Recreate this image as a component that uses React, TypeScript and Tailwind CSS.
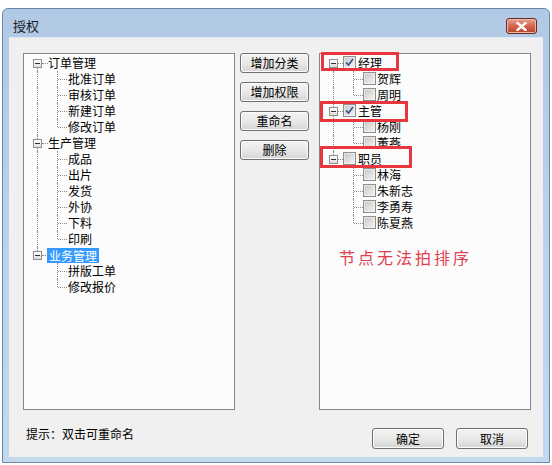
import React from 'react';

type TreeNode = {
  label: string;
  checked?: boolean;
  selected?: boolean;
  children?: string[];
};

const LEFT_TREE: TreeNode[] = [
  { label: '订单管理', children: ['批准订单', '审核订单', '新建订单', '修改订单'] },
  { label: '生产管理', children: ['成品', '出片', '发货', '外协', '下料', '印刷'] },
  { label: '业务管理', selected: true, children: ['拼版工单', '修改报价'] },
];

const RIGHT_TREE: TreeNode[] = [
  { label: '经理', checked: true, children: ['贺辉', '周明'] },
  { label: '主管', checked: true, children: ['杨刚', '董燕'] },
  { label: '职员', checked: false, children: ['林海', '朱新志', '李勇寿', '陈夏燕'] },
];

const FONT = "font-['Noto_Sans_CJK_SC','Noto_Sans',sans-serif]";

const Expander: React.FC = () => (
  <span className="absolute left-[9px] top-[4px] w-[9px] h-[9px] border border-[#919191] bg-gradient-to-b from-white to-[#dcdcdc] flex items-center justify-center">
    <span className="w-[5px] h-px bg-[#333]" />
  </span>
);

const CheckBox: React.FC<{ checked?: boolean; left: string }> = ({ checked, left }) => (
  <span
    className={`absolute ${left} top-[1px] w-[13px] h-[13px] border border-[#8f8f8f] bg-gradient-to-br from-[#e2e2e2] to-[#f6f6f6] flex items-center justify-center`}
  >
    <span className="w-[9px] h-[9px] bg-gradient-to-br from-[#cbcbcb] to-[#f1f1f1] flex items-center justify-center">
      {checked && (
        <svg width="9" height="9" viewBox="0 0 9 9">
          <path d="M1 4.5 L3.5 7 L8 1" fill="none" stroke="#3b4d91" strokeWidth="1.6" />
        </svg>
      )}
    </span>
  </span>
);

const DotV: React.FC<{ left: string; half?: 'top' | 'bottom' }> = ({ left, half }) => (
  <span
    className={`absolute ${left} w-0 border-l border-dotted border-[#8a8a8a] ${
      half === 'top' ? 'top-0 h-[8px]' : half === 'bottom' ? 'top-[8px] bottom-0' : 'top-0 bottom-0'
    }`}
  />
);

const DotH: React.FC<{ left: string; width: string }> = ({ left, width }) => (
  <span className={`absolute ${left} ${width} top-[8px] h-0 border-t border-dotted border-[#8a8a8a]`} />
);

const Tree: React.FC<{ nodes: TreeNode[]; checks?: boolean }> = ({ nodes, checks }) => {
  const rows: React.ReactNode[] = [];
  nodes.forEach((n, i) => {
    const first = i === 0;
    const last = i === nodes.length - 1;
    rows.push(
      <div key={n.label} className="relative h-[16px] flex items-center">
        <DotV left="left-[13px]" half={first ? 'bottom' : last ? 'top' : undefined} />
        <DotH left="left-[18px]" width={checks ? 'w-[5px]' : 'w-[6px]'} />
        <Expander />
        {checks ? (
          <>
            <CheckBox checked={n.checked} left="left-[23px]" />
            <span className="ml-[38px]">{n.label}</span>
          </>
        ) : n.selected ? (
          <span className="ml-[23px] px-[2px] leading-[15px] bg-[#3399ff] text-white">{n.label}</span>
        ) : (
          <span className="ml-[24px]">{n.label}</span>
        )}
      </div>
    );
    (n.children ?? []).forEach((c, j) => {
      const lastChild = j === (n.children ?? []).length - 1;
      rows.push(
        <div key={n.label + c} className="relative h-[16px] flex items-center">
          {!last && <DotV left="left-[13px]" />}
          <DotV left="left-[33px]" half={lastChild ? 'top' : undefined} />
          <DotH left="left-[34px]" width="w-[9px]" />
          {checks ? (
            <>
              <CheckBox left="left-[43px]" />
              <span className="ml-[57px]">{c}</span>
            </>
          ) : (
            <span className="ml-[44px]">{c}</span>
          )}
        </div>
      );
    });
  });
  return <div className="pt-[1px] text-[12px] leading-[16px] text-black">{rows}</div>;
};

const Btn: React.FC<{ label: string; w: string; h: string }> = ({ label, w, h }) => (
  <button
    className={`${w} ${h} border border-[#707070] rounded-[3px] bg-gradient-to-b from-[#f3f3f3] via-[#e9e9e9] to-[#d4d4d4] text-[12px] text-black flex items-center justify-center shadow-[inset_0_0_0_1px_#fbfbfb]`}
  >
    {label}
  </button>
);

export default function App() {
  return (
    <div className={`w-[552px] h-[465px] bg-white pt-[8px] pl-[2px] ${FONT}`}>
      <div className="w-[548px] h-[455px] flex flex-col border border-[#6a87ab] rounded-t-[6px] bg-gradient-to-b from-[#b1c9e5] via-[#bcd2eb] to-[#c4d8ee]">
        {/* title bar */}
        <div className="h-[28px] flex items-start justify-between pl-[10px] pr-[12px]">
          <span className="mt-[10px] text-[13px] leading-[14px] text-[#1b1b1b]">授权</span>
          <div className="mt-[9px] w-[31px] h-[16px] rounded-[3px] border border-[#6e2a1f] bg-gradient-to-b from-[#e7a493] via-[#d0654c] to-[#b8432c] flex items-center justify-center shadow-[inset_0_0_0_1px_#eeb7a8]">
            <svg width="11" height="9" viewBox="0 0 11 9">
              <path d="M1.5 1 L9.5 8 M9.5 1 L1.5 8" stroke="#ffffff" strokeWidth="2.4" strokeLinecap="square" />
            </svg>
          </div>
        </div>

        {/* client area */}
        <div className="mx-[6px] h-[420px] bg-[#f0f0f0] border-t border-[#dfe8f3] flex flex-col">
          <div className="flex pt-[15px] pl-[14px]">
            <div className="w-[212px] h-[357px] border border-[#828790] bg-[#fcfcfc]">
              <Tree nodes={LEFT_TREE} />
            </div>

            <div className="ml-[5px] w-[69px] flex flex-col gap-[9px]">
              <Btn label="增加分类" w="w-[69px]" h="h-[20px]" />
              <Btn label="增加权限" w="w-[69px]" h="h-[20px]" />
              <Btn label="重命名" w="w-[69px]" h="h-[20px]" />
              <Btn label="删除" w="w-[69px]" h="h-[20px]" />
            </div>

            <div className="relative ml-[10px] w-[212px] h-[357px] border border-[#828790] bg-[#fcfcfc]">
              <Tree nodes={RIGHT_TREE} checks />
              <div className="mt-[16px] ml-[19px] text-[16px] leading-[20px] tracking-[3px] text-[#e0404c]">
                节点无法拍排序
              </div>
              <span className="absolute left-[1px] top-[-2px] w-[78px] h-[19px] border-[3px] border-[#e8363f]" />
              <span className="absolute left-[0px] top-[47px] w-[88px] h-[21px] border-[3px] border-[#e8363f]" />
              <span className="absolute left-[0px] top-[92px] w-[92px] h-[22px] border-[3px] border-[#e8363f]" />
            </div>
          </div>

          <div className="flex items-start justify-between pl-[17px] pr-[15px] mt-[18px]">
            <span className="mt-[-2px] text-[12px] leading-[16px] text-black">提示：双击可重命名</span>
            <div className="flex gap-[12px]">
              <Btn label="确定" w="w-[72px]" h="h-[21px]" />
              <Btn label="取消" w="w-[72px]" h="h-[21px]" />
            </div>
          </div>
        </div>
      </div>
    </div>
  );
}
